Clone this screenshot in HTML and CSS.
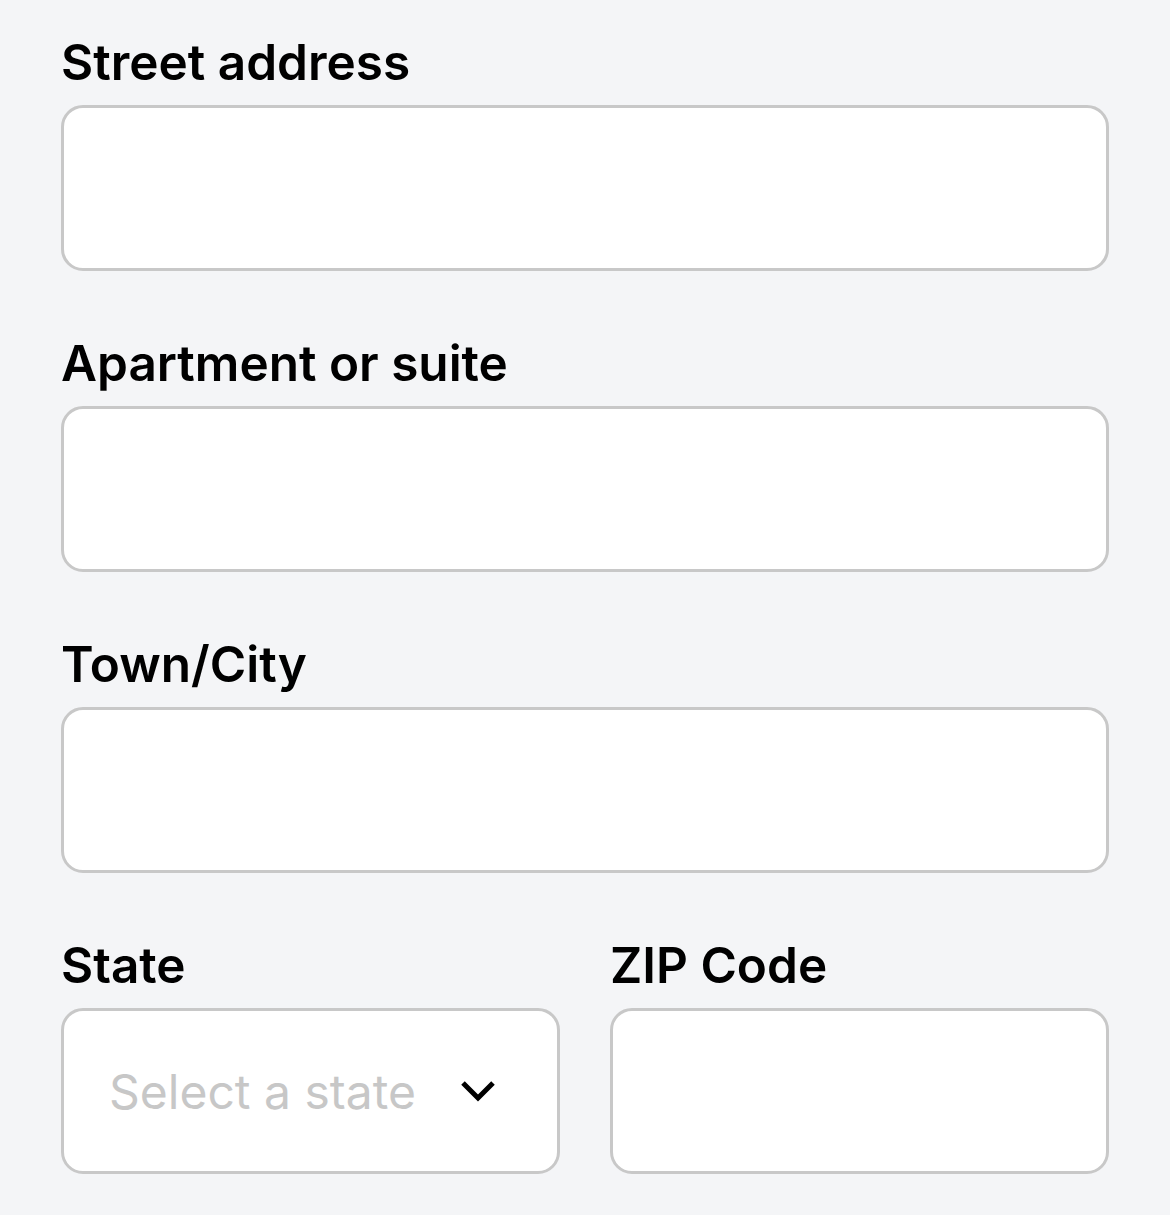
FILE: index.html
```html
<!DOCTYPE html>
<html lang="en">
<head>
    <meta charset="utf-8" />
    <title>Shipping address</title>
    <link rel="stylesheet" href="styles.css">
</head>
<body>
    <main>
        <form class="address-form">
            <div class="field">
                <label for="street">Street address</label>
                <input id="street" type="text" />
            </div>
            <div class="field">
                <label for="apartment">Apartment or suite</label>
                <input id="apartment" type="text" />
            </div>
            <div class="field">
                <label for="city">Town/City</label>
                <input id="city" type="text" />
            </div>
            <div class="field-row">
                <div class="field">
                    <label for="state">State</label>
                    <div class="select-wrap">
                        <select id="state">
                            <option value="" selected>Select a state</option>
                            <option>Alabama</option>
                            <option>Alaska</option>
                            <option>Arizona</option>
                        </select>
                        <svg class="chevron" viewBox="0 0 36 22" width="36" height="22">
                            <path d="M3 3 L18 18 L33 3" fill="none" stroke="#000" stroke-width="5" />
                        </svg>
                    </div>
                </div>
                <div class="field">
                    <label for="zip">ZIP Code</label>
                    <input id="zip" type="text" />
                </div>
            </div>
        </form>
    </main>
</body>
</html>
```

FILE: styles.css
```css
* {
    box-sizing: border-box;
    font-family: Inter, "Noto Sans", Helvetica, Arial, sans-serif;
}

body {
    margin: 0;
    background: #f4f5f7;
}

main {
    padding: 36px 61px 0;
}

.address-form {
    display: flex;
    flex-direction: column;
    gap: 66px;
}

.field {
    display: flex;
    flex-direction: column;
    gap: 17px;
}

.field label {
    font-size: 49.5px;
    font-weight: 600;
    line-height: 52px;
    color: #000;
}

.field input,
.field select {
    width: 100%;
    height: 166px;
    margin: 0;
    border: 3px solid #c8c8c8;
    border-radius: 22px;
    background: #fff;
    font-size: 46px;
    outline: none;
}

.field-row {
    display: grid;
    grid-template-columns: 1fr 1fr;
    gap: 50px;
}

.select-wrap {
    position: relative;
}

.field select {
    appearance: none;
    -webkit-appearance: none;
    padding: 0 0 0 45px;
    color: #c7c7c7;
    font-size: 48px;
}

.chevron {
    position: absolute;
    right: 64px;
    top: 72px;
    pointer-events: none;
}
```
